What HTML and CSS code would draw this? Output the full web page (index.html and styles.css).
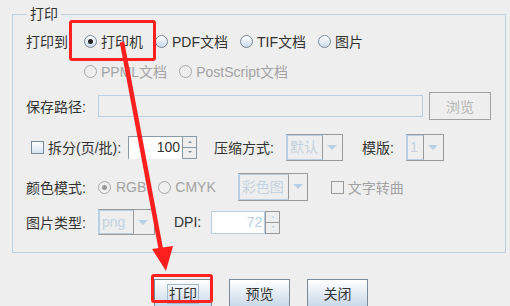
FILE: index.html
```html
<!DOCTYPE html>
<html lang="zh">
<head>
    <meta charset="UTF-8">
    <meta name="viewport" content="width=device-width, initial-scale=1.0">
    <title>打印</title>
    <link rel="stylesheet" href="styles.css">
</head>
<body>

<fieldset class="group">
    <legend>打印</legend>

    <div class="row r1">
        <span class="lbl to">打印到</span>
        <label class="radio on"><i></i>打印机</label>
        <label class="radio"><i></i>PDF文档</label>
        <label class="radio"><i></i>TIF文档</label>
        <label class="radio"><i></i>图片</label>
    </div>

    <div class="row r2">
        <label class="radio off"><i></i>PPML文档</label>
        <label class="radio off"><i></i>PostScript文档</label>
    </div>

    <div class="row r3">
        <span class="lbl w4">保存路径:</span>
        <div class="field path"></div>
        <button class="btn-off browse">浏览</button>
    </div>

    <div class="row r4">
        <label class="check"><i></i>拆分(页/批):</label>
        <div class="spinner">
            <div class="spin-val">100</div>
            <div class="spin-btns"><span class="up"></span><span class="down"></span></div>
        </div>
        <span class="lbl zip">压缩方式:</span>
        <div class="combo c-zip"><div class="combo-val">默认</div><div class="combo-arrow"></div></div>
        <span class="lbl tpl">模版:</span>
        <div class="combo c-tpl"><div class="combo-val">1</div><div class="combo-arrow"></div></div>
    </div>

    <div class="row r5">
        <span class="lbl w4">颜色模式:</span>
        <label class="radio off on"><i></i>RGB</label>
        <label class="radio off"><i></i>CMYK</label>
        <div class="combo c-color"><div class="combo-val">彩色图</div><div class="combo-arrow"></div></div>
        <label class="check off"><i></i>文字转曲</label>
    </div>

    <div class="row r6">
        <span class="lbl w4">图片类型:</span>
        <div class="combo c-type"><div class="combo-val">png</div><div class="combo-arrow"></div></div>
        <span class="lbl dpi">DPI:</span>
        <div class="spinner disabled">
            <div class="spin-val">72</div>
            <div class="spin-btns"><span class="up"></span><span class="down"></span></div>
        </div>
    </div>
</fieldset>

<div class="actions">
    <button class="btn focus"><span>打印</span></button>
    <button class="btn">预览</button>
    <button class="btn">关闭</button>
</div>

<!-- annotations -->
<div class="mark mark-radio"></div>
<div class="mark mark-print"></div>
<svg class="arrow" width="510" height="306" viewBox="0 0 510 306">
    <line x1="122" y1="42" x2="161" y2="250" stroke="#ff1f1f" stroke-width="4.5"/>
    <polygon points="166,271 152,249 173,246" fill="#ff1f1f"/>
</svg>

</body>
</html>
```

FILE: styles.css
```css
* {
    box-sizing: border-box;
}

body {
    margin: 0;
    width: 510px;
    height: 306px;
    overflow: hidden;
    background: #eeeeee;
    color: #333333;
    font-family: "Liberation Sans", "Noto Sans CJK SC", sans-serif;
    font-size: 14px;
    position: relative;
}

.group {
    margin: 7px 4px 0 12px;
    padding: 9px 0 16px 13px;
    border: 1px solid #b8cfe5;
    min-width: 0;
}

.group legend {
    padding: 0 3px;
    margin-left: 1px;
    line-height: 15px;
}

.row {
    display: flex;
    align-items: center;
    white-space: nowrap;
}

.r1 { height: 20px; }
.r2 { height: 20px; margin-top: 10px; padding-left: 58px; }
.r3 { height: 28px; margin-top: 11px; }
.r4 { height: 28px; margin-top: 13px; }
.r5 { height: 28px; margin-top: 12px; }
.r6 { height: 28px; margin-top: 7px; }

.lbl.to { margin-right: 16px; }
.lbl.w4 { width: 72px; }
.lbl.zip { margin: 0 12px 0 17px; }
.lbl.tpl { margin: 0 12px 0 19px; }
.lbl.dpi { margin: 0 10px 0 19px; }

/* radio buttons */
.radio {
    display: flex;
    align-items: center;
    margin-right: 12px;
}

.radio i {
    width: 13px;
    height: 13px;
    border-radius: 50%;
    border: 1px solid #7a8a99;
    background: linear-gradient(#ffffff, #c9d9ea);
    margin-right: 4px;
    position: relative;
}

.radio.on i::after {
    content: "";
    position: absolute;
    left: 3px;
    top: 3px;
    width: 5px;
    height: 5px;
    border-radius: 50%;
    background: #222;
}

.radio.off {
    color: #a3a3a3;
}

.radio.off i {
    border-color: #a8a8a8;
    background: #eeeeee;
}

.radio.off.on i::after {
    background: #999;
}

.r5 .radio { margin-right: 12px; }
.r5 .radio:first-of-type i { margin-right: 5px; }

/* checkboxes */
.check {
    display: flex;
    align-items: center;
}

.check i {
    width: 13px;
    height: 13px;
    border: 1px solid #7a8a99;
    background: linear-gradient(#ffffff, #d5e2f0);
    margin-right: 4px;
}

.r4 .check { margin-left: 5px; margin-right: 7px; }

.check.off {
    color: #a3a3a3;
    margin-left: 23px;
}

.check.off i {
    border-color: #999;
    background: #eeeeee;
}

/* text fields */
.field {
    height: 22px;
    border: 1px solid #b8cfe5;
}

.path {
    width: 325px;
    margin-right: 6px;
}

.btn-off {
    width: 62px;
    height: 28px;
    border: 1px solid #a0a0a0;
    background: #eeeeee;
    color: #b5b5b5;
    font: inherit;
    padding: 0;
}

/* spinner */
.spinner {
    display: flex;
    height: 23px;
}

.spin-val {
    width: 54px;
    background: #fff;
    border-top: 1px solid #8a99a6;
    border-left: 1px solid #8a99a6;
    text-align: right;
    padding-right: 2px;
    line-height: 21px;
}

.spin-btns {
    width: 15px;
    display: flex;
    flex-direction: column;
}

.spin-btns span {
    flex: 1;
    border: 1px solid #8a99a6;
    background: #eeeeee;
    position: relative;
}

.spin-btns span + span {
    border-top: none;
}

.spin-btns span::after {
    content: "";
    position: absolute;
    left: 5px;
    top: 4px;
    border-left: 2px solid transparent;
    border-right: 2px solid transparent;
}

.spin-btns .up::after { border-bottom: 2px solid #7a8a99; }
.spin-btns .down::after { border-top: 2px solid #7a8a99; top: 3px; }

.spinner.disabled .spin-val {
    border: 1px solid #b8cfe5;
    color: #b8cfe5;
}

.spinner.disabled .spin-btns span {
    border-color: #999;
}

.spinner.disabled .spin-btns span::after {
    border-bottom-color: #c5d3e0;
    border-top-color: #c5d3e0;
}

/* combo boxes (disabled) */
.combo {
    display: flex;
    height: 27px;
    border: 1px solid #999;
    border-left-color: #b8cfe5;
}

.combo-val {
    border: 1px solid #b8cfe5;
    border-left: none;
    border-right: 1px solid #999;
    color: #c3d2e0;
    padding-left: 3px;
    line-height: 23px;
    box-shadow: inset 1px 0 0 #b8cfe5;
}

.combo-arrow {
    width: 19px;
    position: relative;
}

.combo-arrow::after {
    content: "";
    position: absolute;
    left: 4px;
    top: 10px;
    border-left: 5px solid transparent;
    border-right: 5px solid transparent;
    border-top: 5px solid #b8cfe5;
}

.c-zip .combo-val { width: 36px; }
.c-tpl .combo-val { width: 17px; }
.c-color { height: 28px; margin-left: 10px; }
.c-color .combo-val { width: 50px; line-height: 24px; }
.c-color .combo-arrow { width: 18px; }
.c-type { height: 26px; }
.c-type .combo-val { width: 35px; line-height: 22px; }
.c-type .combo-arrow { width: 20px; }

/* bottom buttons */
.actions {
    display: flex;
    justify-content: center;
    gap: 17px;
    margin: 26px 0 0 12px;
}

.btn {
    width: 61px;
    height: 28px;
    border: 1px solid #7a8a99;
    background: linear-gradient(#ffffff 0%, #eef3f8 30%, #c9d9ea 100%);
    color: #333;
    font: inherit;
    padding: 0;
}

.btn.focus {
    width: 58px;
}

.btn.focus span {
    border: 1px solid #a3b8cc;
    padding: 1px 1px;
}

/* annotations */
.mark {
    position: absolute;
    border: 3px solid #ff2020;
    border-radius: 3px;
}

.mark-radio {
    left: 69px;
    top: 20px;
    width: 87px;
    height: 41px;
}

.mark-print {
    left: 151px;
    top: 274px;
    width: 62px;
    height: 29px;
}

.arrow {
    position: absolute;
    left: 0;
    top: 0;
    pointer-events: none;
}
```
